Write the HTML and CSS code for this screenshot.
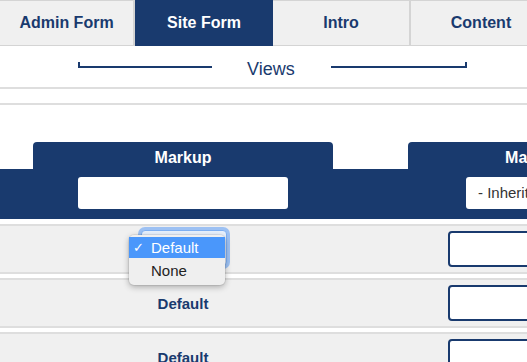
FILE: index.html
```html
<!DOCTYPE html>
<html lang="en">
<head>
    <meta charset="UTF-8">
    <meta name="viewport" content="width=device-width, initial-scale=1.0">
    <title>Site Form - Views</title>
    <link rel="stylesheet" href="styles.css">
</head>
<body>
    <div class="tabs">
        <div class="tab tab-admin">Admin Form</div>
        <div class="tab tab-site active">Site Form</div>
        <div class="tab tab-intro">Intro</div>
        <div class="tab tab-content">Content</div>
    </div>

    <div class="views">
        <span class="bracket left"></span>
        <span class="views-label">Views</span>
        <span class="bracket right"></span>
    </div>
    <div class="rule"></div>
    <div class="rule second"></div>

    <div class="grid head-tabs">
        <div class="col-tab col-a">Markup</div>
        <div class="col-tab col-b">Markup</div>
    </div>
    <div class="grid band">
        <div class="col-a"><input class="head-input" type="text"></div>
        <div class="col-b"><div class="head-input inherit">- Inherit -</div></div>
    </div>

    <div class="grid row">
        <div class="col-a cell">
            <div class="select-focus"></div>
            <div class="popup">
                <div class="option selected"><span class="check">&#10003;</span>Default</div>
                <div class="option">None</div>
            </div>
        </div>
        <div class="col-b cell"><div class="row-input"></div></div>
    </div>
    <div class="grid row">
        <div class="col-a cell"><span class="value">Default</span></div>
        <div class="col-b cell"><div class="row-input"></div></div>
    </div>
    <div class="grid row">
        <div class="col-a cell"><span class="value">Default</span></div>
        <div class="col-b cell"><div class="row-input"></div></div>
    </div>
</body>
</html>
```

FILE: styles.css
```css
body {
    margin: 0;
    font-family: "Liberation Sans", Arial, sans-serif;
    background: white;
    overflow: hidden;
    width: 527px;
}
.tabs {
    display: flex;
    height: 44px;
    background: #f0f0f0;
    border-top: 1px solid #d4d4d4;
    border-bottom: 1px solid #d4d4d4;
    white-space: nowrap;
}
.tab {
    flex: none;
    display: flex;
    align-items: center;
    justify-content: center;
    font-size: 16px;
    font-weight: bold;
    color: #193a6e;
    border-right: 2px solid #d4d4d4;
    box-sizing: border-box;
}
.tab-admin { width: 135px; }
.tab-site { width: 138px; }
.tab-intro { width: 138px; }
.tab-content { width: 140px; border-right: none; }
.tab.active {
    background: #193a6e;
    color: white;
    border-right: none;
    margin-top: -1px;
    margin-bottom: -1px;
}
.views {
    display: flex;
    align-items: flex-start;
    height: 25px;
    padding: 16px 0 0 78px;
}
.bracket {
    height: 4px;
    border-bottom: 2px solid #193a6e;
}
.bracket.left {
    width: 132px;
    border-left: 2px solid #193a6e;
}
.bracket.right {
    width: 134px;
    border-right: 2px solid #193a6e;
}
.views-label {
    font-size: 18px;
    line-height: 20px;
    margin: -3px 36px 0 35px;
    color: #193a6e;
}
.rule {
    height: 2px;
    background: #dedede;
}
.rule.second {
    margin-top: 14px;
}
.grid {
    display: grid;
    grid-template-columns: 33px 300px 75px 251px;
}
.col-a { grid-column: 2; }
.col-b { grid-column: 4; }
.head-tabs {
    margin-top: 37px;
    height: 27px;
}
.col-tab {
    background: #193a6e;
    color: white;
    font-weight: bold;
    font-size: 16px;
    text-align: center;
    line-height: 32px;
    border-radius: 4px 4px 0 0;
}
.band {
    background: #193a6e;
    height: 50px;
    padding-top: 8px;
    box-sizing: border-box;
}
.head-input {
    display: block;
    width: 210px;
    height: 32px;
    box-sizing: border-box;
    margin-left: 45px;
    border: none;
    border-radius: 3px;
    background: white;
}
.head-input.inherit {
    margin-left: 58px;
    width: 190px;
    padding-left: 12px;
    font-size: 15px;
    line-height: 32px;
    color: #333;
    white-space: nowrap;
}
.row {
    height: 46px;
    background: #f0f0f0;
    border-top: 2px solid #dedede;
    border-bottom: 2px solid #dedede;
    margin-bottom: 4px;
}
.band + .row {
    margin-top: 5px;
}
.cell {
    position: relative;
    display: flex;
    align-items: center;
    justify-content: center;
}
.col-b.cell {
    justify-content: flex-start;
}
.value {
    font-size: 15px;
    font-weight: bold;
    color: #193a6e;
}
.row-input {
    width: 200px;
    height: 36px;
    margin-left: 40px;
    box-sizing: border-box;
    border: 2px solid #193a6e;
    border-radius: 4px;
    background: white;
}
.select-focus {
    position: absolute;
    left: 108px;
    top: 4px;
    width: 84px;
    height: 34px;
    border: 1px solid #7fb0f2;
    border-radius: 4px;
    background: #e8f1fd;
    box-shadow: 0 0 0 3px rgba(90, 155, 245, 0.55);
}
.popup {
    position: absolute;
    left: 96px;
    top: 9px;
    width: 96px;
    padding: 2px 0 4px;
    background: #efefef;
    border-radius: 5px;
    box-shadow: 0 2px 6px rgba(0, 0, 0, 0.3), 0 0 0 1px rgba(0, 0, 0, 0.06);
}
.option {
    height: 21px;
    line-height: 21px;
    padding-left: 22px;
    font-size: 15px;
    color: #222;
    position: relative;
}
.option.selected {
    background: #4a97fb;
    color: white;
    margin-bottom: 2px;
}
.check {
    position: absolute;
    left: 4px;
    font-size: 13px;
}
```
